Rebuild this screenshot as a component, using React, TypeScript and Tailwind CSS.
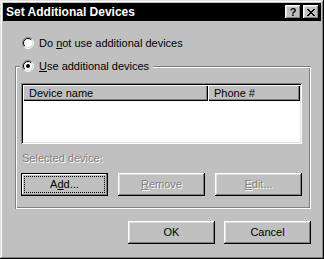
import React from "react";

const raised =
  "shadow-[inset_-1px_-1px_#000,inset_1px_1px_#fff,inset_-2px_-2px_#808080,inset_2px_2px_#dfdfdf]";
const disabled = "text-[#808080] [text-shadow:1px_1px_0_#fff]";

function Radio({ checked }: { checked?: boolean }) {
  const c = 6;
  const d = (r: number) => {
    const k = r * Math.SQRT1_2;
    return {
      tl: `M ${c - k} ${c + k} A ${r} ${r} 0 0 1 ${c + k} ${c - k}`,
      br: `M ${c + k} ${c - k} A ${r} ${r} 0 0 1 ${c - k} ${c + k}`,
    };
  };
  const o = d(5.5);
  const i = d(4.5);
  return (
    <svg width="12" height="12" viewBox="0 0 12 12" className="shrink-0">
      <circle cx="6" cy="6" r="4.5" fill="#fff" />
      <path d={o.tl} stroke="#808080" strokeWidth="1" fill="none" />
      <path d={o.br} stroke="#fff" strokeWidth="1" fill="none" />
      <path d={i.tl} stroke="#000" strokeWidth="1" fill="none" />
      <path d={i.br} stroke="#dfdfdf" strokeWidth="1" fill="none" />
      {checked && <circle cx="6" cy="6" r="2" fill="#000" />}
    </svg>
  );
}

function CloseGlyph() {
  const rows = ["11000011", "01100110", "00111100", "00011000", "00111100", "01100110", "11000011"];
  return (
    <svg width="8" height="7" viewBox="0 0 8 7" shapeRendering="crispEdges">
      {rows.flatMap((r, y) =>
        r.split("").map((ch, x) => (ch === "1" ? <rect key={`${x}-${y}`} x={x} y={y} width="1" height="1" fill="#000" /> : null))
      )}
    </svg>
  );
}

export default function App() {
  return (
    <div className="w-[324px] h-[259px] bg-[#c0c0c0] p-[3px] flex flex-col text-black text-[11px] leading-[13px] font-['Liberation_Sans',Arial,sans-serif] shadow-[inset_-1px_-1px_#000,inset_1px_1px_#dfdfdf,inset_-2px_-2px_#808080,inset_2px_2px_#fff]">
      {/* Title bar */}
      <div className="h-[18px] bg-black flex items-center pl-[3px] pr-[2px]">
        <span className="text-white font-bold text-[12px] leading-[14px]">Set Additional Devices</span>
        <div className="ml-auto flex gap-[2px]">
          <div className={`w-[16px] h-[14px] bg-[#c0c0c0] flex items-center justify-center font-bold text-[11px] leading-[11px] ${raised}`}>
            ?
          </div>
          <div className={`w-[16px] h-[14px] bg-[#c0c0c0] flex items-center justify-center ${raised}`}>
            <CloseGlyph />
          </div>
        </div>
      </div>

      {/* Radio 1 */}
      <div className="mt-[16px] h-[12px] pl-[19px] flex items-center gap-[5px]">
        <Radio />
        <span>
          Do <span className="underline">n</span>ot use additional devices
        </span>
      </div>

      {/* Group box */}
      <div className="relative mt-[17px] ml-[12px] w-[296px] h-[143px] pt-[17px] pl-[6px] pr-[9px] shadow-[inset_1px_1px_#808080,inset_-1px_-1px_#fff,inset_2px_2px_#fff,inset_-2px_-2px_#808080]">
        <div className="absolute left-[5px] top-[-6px] h-[12px] flex items-center gap-[5px] bg-[#c0c0c0] pl-[2px] pr-[4px]">
          <Radio checked />
          <span>
            <span className="underline">U</span>se additional devices
          </span>
        </div>

        {/* List view */}
        <div className="h-[61px] bg-white p-[2px] shadow-[inset_1px_1px_#808080,inset_-1px_-1px_#fff,inset_2px_2px_#000,inset_-2px_-2px_#dfdfdf]">
          <div className="flex h-[16px] bg-[#c0c0c0]">
            <div className="w-[185px] flex items-center pl-[6px] shadow-[inset_1px_1px_#fff,inset_-1px_-1px_#000,inset_-2px_-2px_#808080]">
              Device name
            </div>
            <div className="flex-1 flex items-center pl-[6px] shadow-[inset_1px_1px_#fff,inset_-1px_-1px_#000,inset_-2px_-2px_#808080]">
              Phone #
            </div>
          </div>
        </div>

        <div className={`mt-[8px] ml-[1px] h-[13px] ${disabled}`}>Selected device:</div>

        <div className="mt-[8px] flex justify-between">
          <div className="w-[87px] h-[23px] flex border border-black bg-[#c0c0c0] shadow-[inset_-1px_-1px_#808080,inset_1px_1px_#fff]">
            <div className="flex-1 m-[2px] border border-dotted border-black flex items-center justify-center">
              A<span className="underline">d</span>d...
            </div>
          </div>
          <div className={`w-[87px] h-[23px] flex items-center justify-center bg-[#c0c0c0] ${raised} ${disabled}`}>
            <span>
              <span className="underline">R</span>emove
            </span>
          </div>
          <div className={`w-[87px] h-[23px] flex items-center justify-center bg-[#c0c0c0] ${raised} ${disabled}`}>
            <span>
              <span className="underline">E</span>dit...
            </span>
          </div>
        </div>
      </div>

      {/* OK / Cancel */}
      <div className="mt-[12px] flex justify-end gap-[9px] pr-[10px]">
        <div className={`w-[87px] h-[23px] flex items-center justify-center bg-[#c0c0c0] ${raised}`}>OK</div>
        <div className={`w-[87px] h-[23px] flex items-center justify-center bg-[#c0c0c0] ${raised}`}>Cancel</div>
      </div>
    </div>
  );
}
